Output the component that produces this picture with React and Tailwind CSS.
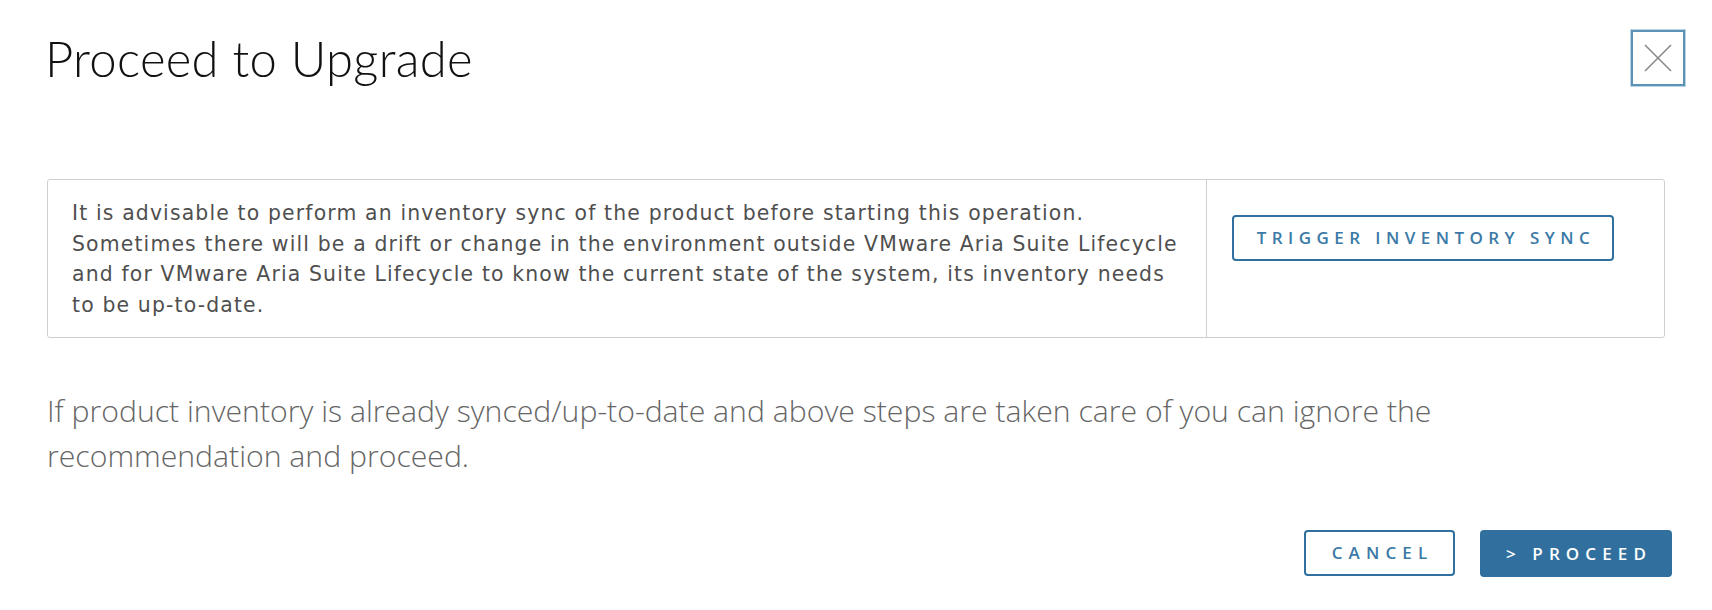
export default function App() {
  return (
    <div className="w-[1712px] h-[610px] bg-white overflow-hidden">
      {/* Header */}
      <div className="flex items-start justify-between pl-[45px] pr-[27px] pt-[30px]">
        <h1 className="font-['Lato',sans-serif] font-light text-[49px] leading-[56px] text-[#111] tracking-[0.3px]">
          Proceed to Upgrade
        </h1>
        <button className="w-[54px] h-[56px] flex items-center justify-center border-2 border-[#5c92b5] shadow-[0_0_0_1px_#b9d5e5] bg-white">
          <svg width="30" height="30" viewBox="0 0 30 30" fill="none" stroke="#8a8a8a" strokeWidth="1.6">
            <path d="M2 2 L28 28 M28 2 L2 28" />
          </svg>
        </button>
      </div>

      {/* Inventory sync recommendation */}
      <div className="mx-[47px] mt-[93px] h-[159px] flex border border-[#cfcfcf] rounded-[3px]">
        <div className="w-[1159px] border-r border-[#cfcfcf] pl-[24px] pt-[18px] whitespace-nowrap font-['DejaVu_Sans',sans-serif] text-[20.4px] leading-[30.5px] tracking-[1.15px] text-[#4f4f4f]">
          It is advisable to perform an inventory sync of the product before starting this operation.<br />
          Sometimes there will be a drift or change in the environment outside VMware Aria Suite Lifecycle<br />
          and for VMware Aria Suite Lifecycle to know the current state of the system, its inventory needs<br />
          to be up-to-date.
        </div>
        <div className="flex-1 pl-[25px] pt-[35px]">
          <button className="w-[382px] h-[46px] pl-[6px] border-2 border-[#31709e] rounded-[4px] text-[#3b79a6] font-['Open_Sans',sans-serif] font-semibold text-[17px] tracking-[0.32em] uppercase">
            Trigger Inventory Sync
          </button>
        </div>
      </div>

      {/* Note */}
      <p className="ml-[47px] mt-[50px] whitespace-nowrap font-['Open_Sans',sans-serif] font-light text-[30.2px] leading-[45px] text-[#666]">
        If product inventory is already synced/up-to-date and above steps are taken care of you can ignore the<br />
        recommendation and proceed.
      </p>

      {/* Footer */}
      <div className="flex justify-end gap-[25px] pr-[40px] mt-[52px]">
        <button className="w-[151px] h-[46px] pl-[6px] border-2 border-[#31709e] rounded-[4px] text-[#3b79a6] font-['Open_Sans',sans-serif] font-semibold text-[17px] tracking-[0.36em]">
          CANCEL
        </button>
        <button className="w-[192px] h-[47px] pl-[6px] bg-[#31709e] rounded-[4px] text-white font-['Open_Sans',sans-serif] font-semibold text-[17px] tracking-[0.36em]">
          &gt; PROCEED
        </button>
      </div>
    </div>
  )
}
